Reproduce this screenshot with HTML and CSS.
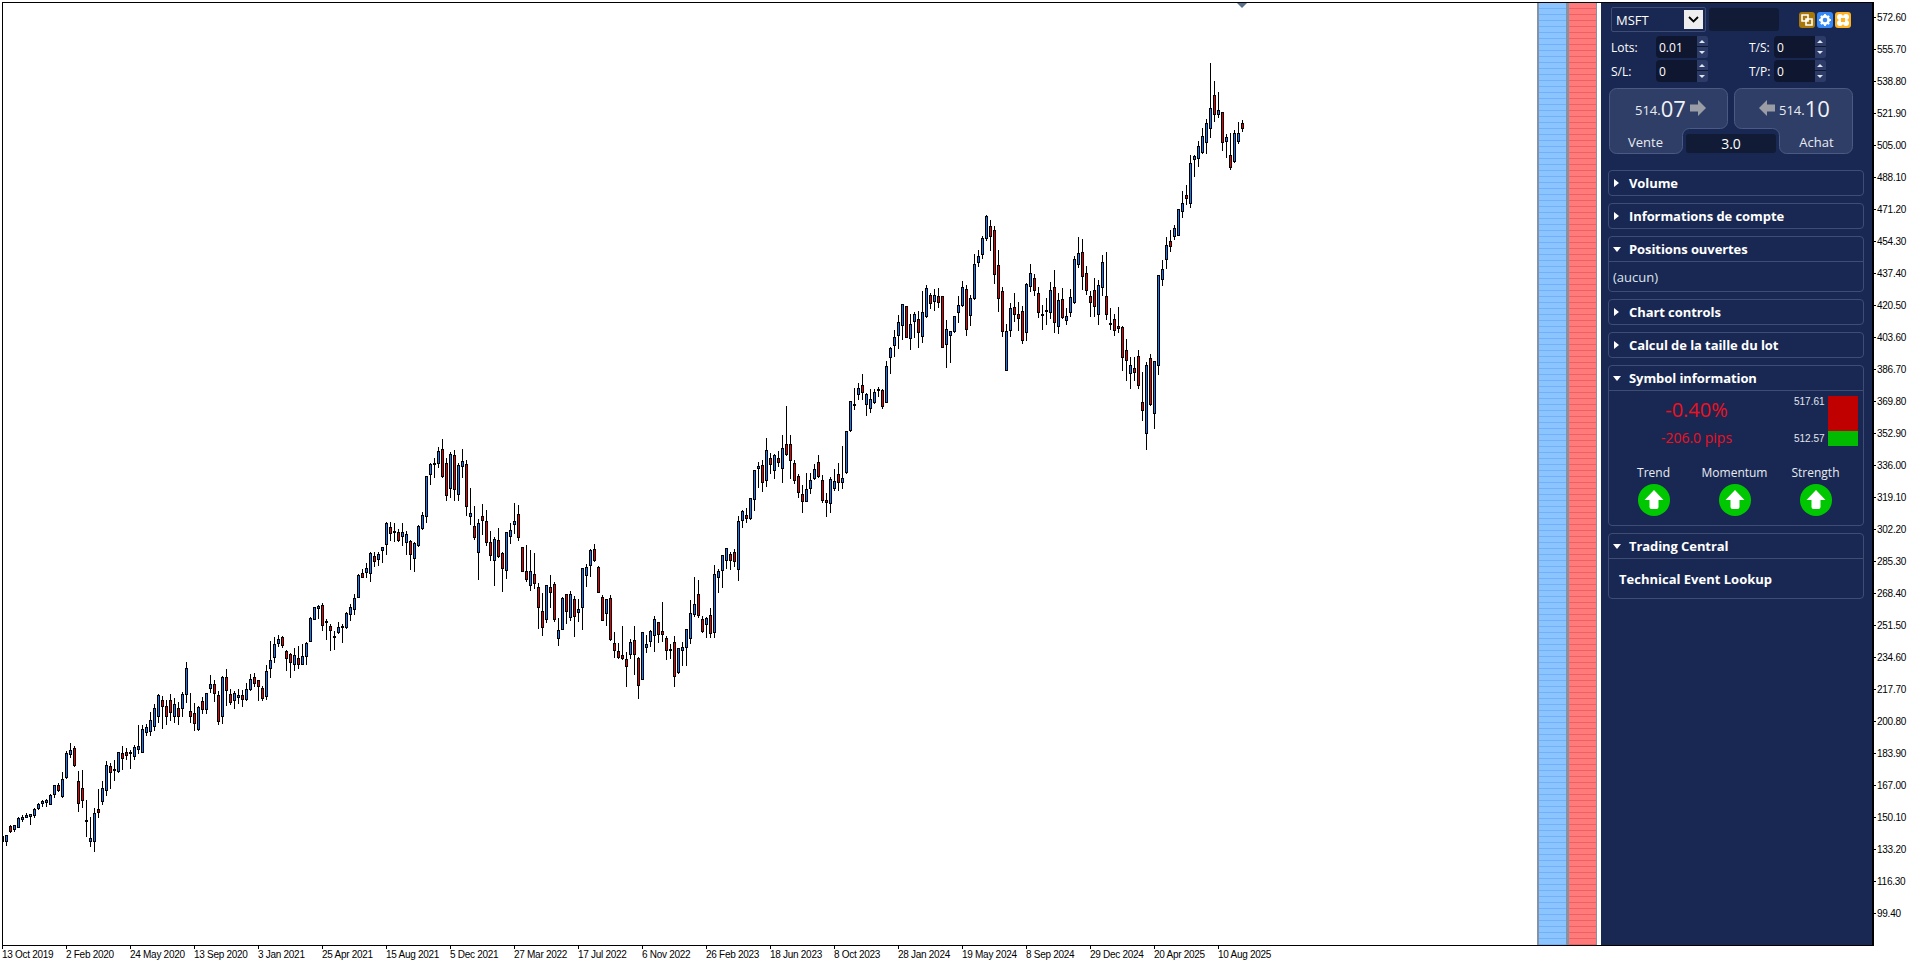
FILE: index.html
```html
<!DOCTYPE html>
<html>

<head>
    <title>MSFT chart</title>
    <link rel="stylesheet" href="styles.css">
</head>

<body>
    <div class="terminal">
        <div class="plot">
            <div class="canvas">
                <svg id="candles" class="candles" width="1534" height="941" viewBox="3 3 1534 941"></svg>
                <div class="marker"></div>
            </div>
            <div class="depth">
                <div class="depth-bar depth-buy"></div>
                <div class="depth-bar depth-sell"></div>
            </div>
            <div class="panel">
                <div class="symbol-row">
                    <div class="select">
                        <span>MSFT</span>
                        <span class="select-btn">
                            <svg width="11" height="7" viewBox="0 0 11 7"><path d="M1 1l4.5 4.5L10 1" fill="none" stroke="#000" stroke-width="1.8"/></svg>
                        </span>
                    </div>
                    <div class="search"></div>
                    <div class="tools">
                        <span class="tool tool-dark">
                            <svg width="12" height="12" viewBox="0 0 12 12"><path d="M1 1h6v6H1zM5 5h6v6H5z" fill="none" stroke="#fff" stroke-width="1.6"/></svg>
                        </span>
                        <span class="tool tool-blue">
                            <svg width="14" height="14" viewBox="0 0 14 14"><circle cx="7" cy="7" r="3.6" fill="none" stroke="#fff" stroke-width="2.6"/><path d="M7 1v2M7 11v2M1 7h2M11 7h2M2.8 2.8l1.4 1.4M9.8 9.8l1.4 1.4M2.8 11.2l1.4-1.4M9.8 4.2l1.4-1.4" stroke="#fff" stroke-width="1.8"/></svg>
                        </span>
                        <span class="tool tool-gold">
                            <svg width="14" height="14" viewBox="0 0 14 14"><circle cx="4" cy="4" r="3" fill="#fff"/><circle cx="10" cy="4" r="3" fill="#fff"/><circle cx="4" cy="10" r="3" fill="#fff"/><circle cx="10" cy="10" r="3" fill="#fff"/><rect x="5" y="5" width="4" height="4" fill="#ffb01e"/></svg>
                        </span>
                    </div>
                </div>

                <div class="fields">
                    <label class="field-label">Lots:</label>
                    <div class="field"><input class="num" value="0.01"><span class="spin"></span></div>
                    <label class="field-label">T/S:</label>
                    <div class="field"><input class="num" value="0"><span class="spin"></span></div>
                    <label class="field-label">S/L:</label>
                    <div class="field"><input class="num" value="0"><span class="spin"></span></div>
                    <label class="field-label">T/P:</label>
                    <div class="field"><input class="num" value="0"><span class="spin"></span></div>
                </div>

                <div class="trade">
                    <svg class="trade-bg" width="244" height="66" viewBox="0 0 244 66">
                        <path id="btn" d="M7.5 .5H111.5a7 7 0 0 1 7 7V33.5a7 7 0 0 1-7 7H80.5a7 7 0 0 0-7 7V58.5a7 7 0 0 1-7 7H7.5a7 7 0 0 1-7-7V7.5a7 7 0 0 1 7-7Z"/>
                        <use href="#btn" transform="translate(244 0) scale(-1 1)"/>
                    </svg>
                    <div class="quote quote-sell">
                        <span class="quote-small">514.</span><span class="quote-big">07</span>
                        <svg width="16" height="16" viewBox="0 0 16 16"><path d="M0 4.5h8V0l8 8-8 8v-4.500H0z" fill="#9a9da6"/></svg>
                    </div>
                    <div class="quote quote-buy">
                        <svg width="16" height="16" viewBox="0 0 16 16"><path d="M16 4.500H8V0L0 8l8 8v-4.500h8z" fill="#9a9da6"/></svg>
                        <span class="quote-small">514.</span><span class="quote-big">10</span>
                    </div>
                    <div class="trade-label trade-sell">Vente</div>
                    <div class="trade-size"><span>3.0</span></div>
                    <div class="trade-label trade-buy">Achat</div>
                </div>

                <div class="section">
                    <div class="section-head">Volume</div>
                </div>
                <div class="section">
                    <div class="section-head">Informations de compte</div>
                </div>
                <div class="section open">
                    <div class="section-head">Positions ouvertes</div>
                    <div class="section-body none">(aucun)</div>
                </div>
                <div class="section">
                    <div class="section-head">Chart controls</div>
                </div>
                <div class="section">
                    <div class="section-head">Calcul de la taille du lot</div>
                </div>
                <div class="section open">
                    <div class="section-head">Symbol information</div>
                    <div class="section-body info">
                        <div class="info-top">
                            <div class="change">
                                <div class="change-pct">-0.40%</div>
                                <div class="change-pips">-206.0 pips</div>
                            </div>
                            <div class="range">
                                <div class="range-labels">
                                    <span>517.61</span>
                                    <span>512.57</span>
                                </div>
                                <div class="range-bar">
                                    <div class="range-down"></div>
                                    <div class="range-up"></div>
                                </div>
                            </div>
                        </div>
                        <div class="signals">
                            <div class="signal">Trend
                                <svg width="32" height="32" viewBox="0 0 32 32"><circle cx="16" cy="16" r="16" fill="#00c800"/><path d="M16 6l9.500 10H20.500v7a2 2 0 0 1-2 2h-5a2 2 0 0 1-2-2v-7H6.500z" fill="#fff"/></svg>
                            </div>
                            <div class="signal">Momentum
                                <svg width="32" height="32" viewBox="0 0 32 32"><circle cx="16" cy="16" r="16" fill="#00c800"/><path d="M16 6l9.500 10H20.500v7a2 2 0 0 1-2 2h-5a2 2 0 0 1-2-2v-7H6.500z" fill="#fff"/></svg>
                            </div>
                            <div class="signal">Strength
                                <svg width="32" height="32" viewBox="0 0 32 32"><circle cx="16" cy="16" r="16" fill="#00c800"/><path d="M16 6l9.500 10H20.500v7a2 2 0 0 1-2 2h-5a2 2 0 0 1-2-2v-7H6.500z" fill="#fff"/></svg>
                            </div>
                        </div>
                    </div>
                </div>
                <div class="section open">
                    <div class="section-head">Trading Central</div>
                    <div class="section-body lookup">Technical Event Lookup</div>
                </div>
            </div>
        </div>

        <div class="axis-y">
            <span>572.60</span><span>555.70</span><span>538.80</span><span>521.90</span>
            <span>505.00</span><span>488.10</span><span>471.20</span><span>454.30</span>
            <span>437.40</span><span>420.50</span><span>403.60</span><span>386.70</span>
            <span>369.80</span><span>352.90</span><span>336.00</span><span>319.10</span>
            <span>302.20</span><span>285.30</span><span>268.40</span><span>251.50</span>
            <span>234.60</span><span>217.70</span><span>200.80</span><span>183.90</span>
            <span>167.00</span><span>150.10</span><span>133.20</span><span>116.30</span>
            <span>99.40</span>
        </div>

        <div class="axis-x">
            <span>13 Oct 2019</span><span>2 Feb 2020</span><span>24 May 2020</span><span>13 Sep 2020</span>
            <span>3 Jan 2021</span><span>25 Apr 2021</span><span>15 Aug 2021</span><span>5 Dec 2021</span>
            <span>27 Mar 2022</span><span>17 Jul 2022</span><span>6 Nov 2022</span><span>26 Feb 2023</span>
            <span>18 Jun 2023</span><span>8 Oct 2023</span><span>28 Jan 2024</span><span>19 May 2024</span>
            <span>8 Sep 2024</span><span>29 Dec 2024</span><span>20 Apr 2025</span><span>10 Aug 2025</span>
        </div>
    </div>
    <script src="chart.js"></script>
</body>

</html>
```

FILE: styles.css
```css
body {
    margin: 0;
    width: 1918px;
    height: 964px;
    overflow: hidden;
    background: #fff;
    font-family: "Open Sans", sans-serif;
}

.terminal {
    display: grid;
    grid-template-columns: 1872px 44px;
    grid-template-rows: 944px 18px;
    padding: 2px 0 0 2px;
}

.plot {
    display: flex;
    border-top: 1px solid #000;
    border-left: 1px solid #000;
    border-bottom: 1px solid #000;
    border-right: 3px solid #000;
    box-sizing: border-box;
    min-height: 0;
}

.canvas {
    position: relative;
    width: 1534px;
}

.candles {
    display: block;
    shape-rendering: crispEdges;
}

.marker {
    position: absolute;
    top: 0;
    left: 1234px;
    border-left: 5px solid transparent;
    border-right: 5px solid transparent;
    border-top: 5px solid #5a708a;
}

/* depth columns beside the chart */
.depth {
    display: flex;
    width: 64px;
    box-sizing: border-box;
    padding-right: 4px;
}

.depth-bar {
    width: 27px;
    border-left: 2px solid #8492a3;
}

.depth-buy {
    background: repeating-linear-gradient(#8cc4ff 0, #8cc4ff 5px, #6fb2fb 5px, #6fb2fb 6px);
}

.depth-sell {
    width: 28px;
    border-left-width: 3px;
    border-right: 1px solid #8492a3;
    background: repeating-linear-gradient(#ff7b7b 0, #ff7b7b 5px, #ef6060 5px, #ef6060 6px);
}

/* trading panel */
.panel {
    flex: 1;
    background: #192852;
    color: #fff;
    padding: 4px 8px 0 7px;
    display: flex;
    flex-direction: column;
    gap: 7px;
    font-size: 13px;
}

.symbol-row {
    display: flex;
    align-items: center;
    margin: 0 0 0 3px;
    height: 25px;
}

.select {
    width: 95px;
    height: 25px;
    box-sizing: border-box;
    border: 1px solid #3f4d75;
    border-radius: 2px;
    display: flex;
    align-items: center;
    justify-content: space-between;
    padding: 0 2px 0 4px;
    font-size: 13px;
}

.select-btn {
    width: 19px;
    height: 19px;
    background: #eee;
    display: flex;
    align-items: center;
    justify-content: center;
}

.search {
    width: 70px;
    height: 23px;
    margin-left: 3px;
    background: #111b36;
    border-radius: 3px;
}

.tools {
    display: flex;
    gap: 2px;
    margin-left: 20px;
}

.tool {
    width: 16px;
    height: 16px;
    border-radius: 3px;
    display: flex;
    align-items: center;
    justify-content: center;
}

.tool-dark { background: #a8780a; }
.tool-blue { background: #3689f5; }
.tool-gold { background: #ffb01e; }

.fields {
    display: grid;
    grid-template-columns: 45px 52px 41px 25px 52px;
    grid-auto-rows: 22px;
    row-gap: 2px;
    margin: -3px 0 -1px 3px;
    align-items: center;
    font-size: 12px;
}

.fields .field-label:nth-of-type(even) {
    grid-column: 4;
}

.fields .field:nth-of-type(even) {
    grid-column: 5;
}

.field {
    display: flex;
    height: 22px;
}

.num {
    width: 41px;
    box-sizing: border-box;
    border: none;
    padding: 0 3px;
    background: #0f1730;
    color: #fff;
    border-radius: 4px 0 0 4px;
    font: 12px "Open Sans", sans-serif;
}

.spin {
    position: relative;
    width: 11px;
    background: linear-gradient(#2c3b68 0, #2c3b68 10px, #0f1730 10px, #0f1730 11px, #2c3b68 11px);
    border-radius: 0 3px 3px 0;
}

.spin::before,
.spin::after {
    content: "";
    position: absolute;
    left: 2px;
    border-left: 3px solid transparent;
    border-right: 3px solid transparent;
}

.spin::before {
    top: 4px;
    border-bottom: 3px solid #dfe4f0;
}

.spin::after {
    bottom: 4px;
    border-top: 3px solid #dfe4f0;
}

.trade {
    position: relative;
    display: grid;
    grid-template-columns: 73px 98px 73px;
    grid-template-rows: 41px 25px;
    width: 244px;
    margin: 0 0 9px 1px;
}

.trade-bg {
    position: absolute;
    top: 0;
    left: 0;
    fill: #2f3e66;
    stroke: #4a5a82;
}

.quote {
    position: relative;
    display: flex;
    align-items: center;
    height: 33px;
    padding-top: 3px;
    grid-row: 1;
}

.quote-sell {
    grid-column: 1 / 3;
    padding-left: 26px;
}

.quote-sell svg {
    margin-left: 4px;
}

.quote-buy {
    grid-column: 2 / 4;
    padding-left: 77px;
}

.quote-buy svg {
    margin-right: 4px;
}

.quote-small {
    font-size: 13px;
    padding-top: 5px;
    color: #e8ebf3;
}

.quote-big {
    font-size: 22px;
    line-height: 26px;
    color: #f0f2f8;
}

.trade-label {
    position: relative;
    text-align: center;
    line-height: 27px;
    font-size: 13px;
    color: #e8ebf3;
}

.trade-size {
    position: relative;
    padding: 5px 4px 1px;
}

.trade-size span {
    display: block;
    height: 19px;
    line-height: 20px;
    background: #111b36;
    border-radius: 3px;
    text-align: center;
    font-size: 14px;
}

.section {
    border: 1px solid #3f4d75;
    border-radius: 4px;
    width: 256px;
    box-sizing: border-box;
}

.section-head {
    position: relative;
    height: 24px;
    line-height: 24px;
    padding-left: 20px;
    font-weight: 700;
    font-size: 13px;
    letter-spacing: -.08px;
}

.section-head::before {
    content: "";
    position: absolute;
    left: 5px;
    top: 8px;
    border-top: 4px solid transparent;
    border-bottom: 4px solid transparent;
    border-left: 5px solid #fff;
}

.open .section-head::before {
    left: 4px;
    top: 10px;
    border-left: 4px solid transparent;
    border-right: 4px solid transparent;
    border-top: 5px solid #fff;
    border-bottom: none;
}

.section-body {
    border-top: 1px solid #3f4d75;
}

.none {
    height: 29px;
    line-height: 31px;
    padding-left: 4px;
    color: #dfe4f0;
}

.info {
    height: 135px;
    box-sizing: border-box;
    padding-top: 5px;
}

.info-top {
    display: flex;
    height: 50px;
}

.change {
    width: 175px;
    text-align: center;
    color: #f0101f;
}

.change-pct {
    font-size: 20px;
    line-height: 27px;
}

.change-pips {
    font-size: 14px;
    line-height: 20px;
    margin-top: 5px;
}

.range {
    display: flex;
    gap: 3px;
    margin-left: 10px;
}

.range-labels {
    display: flex;
    flex-direction: column;
    justify-content: space-between;
    height: 48px;
    font: 10px "Liberation Sans", sans-serif;
    color: #e4e6ee;
}

.range-bar {
    width: 30px;
    height: 50px;
    display: flex;
    flex-direction: column;
}

.range-down {
    height: 35px;
    background: #c00000;
}

.range-up {
    height: 15px;
    background: #00bb00;
}

.signals {
    display: flex;
    margin-top: 18px;
    padding-left: 4px;
}

.signal {
    display: flex;
    flex-direction: column;
    align-items: center;
    width: 81px;
    gap: 3px;
    line-height: 17px;
    font-size: 12px;
    color: #e8ebf3;
}

.lookup {
    height: 40px;
    line-height: 40px;
    box-sizing: border-box;
    padding-left: 10px;
    font-weight: 700;
}

/* axes */
.axis-y {
    display: flex;
    flex-direction: column;
    padding-top: 6px;
    font: 10px "Liberation Sans", sans-serif;
    letter-spacing: -.25px;
    color: #000;
}

.axis-y span {
    position: relative;
    flex: 0 0 32.02px;
    line-height: 20px;
    padding-left: 3px;
}

.axis-y span::before {
    content: "";
    position: absolute;
    left: 0;
    top: 9px;
    width: 2px;
    height: 1px;
    background: #000;
}

.axis-x {
    grid-column: 1 / 3;
    display: flex;
    font: 10px "Liberation Sans", sans-serif;
    letter-spacing: -.28px;
    color: #000;
}

.axis-x span {
    position: relative;
    flex: 0 0 64px;
    line-height: 18px;
    box-sizing: border-box;
    white-space: nowrap;
}

.axis-x span::before {
    content: "";
    position: absolute;
    left: 0;
    top: 0;
    width: 1px;
    height: 3px;
    background: #000;
}
```

FILE: chart.js
```js
// rows: high, body top, body bottom, low (pixel y), then 1 for a falling candle
// one candle every 4px starting at x = 2
var rows = [
    [836,836,841,841,0],[835,835,841,845,0],[825,826,831,832,1],[825,825,829,831,0],[817,818,827,827,0],
    [815,817,819,821,0],[813,815,817,817,0],[814,814,816,824,0],[808,809,815,817,0],[803,804,808,809,0],
    [800,801,803,806,0],[799,800,802,806,0],[794,795,804,804,0],[785,785,794,797,0],[783,785,790,791,1],
    [772,779,796,797,0],[751,753,777,778,0],[743,750,754,757,0],[746,748,765,766,1],[771,781,803,811,1],
    [770,788,800,807,1],[800,820,821,836,0],[817,838,841,846,0],[808,813,841,851,0],[789,809,812,817,1],
    [781,788,801,804,0],[761,765,790,795,0],[763,766,772,788,1],[760,769,770,780,0],[752,752,771,772,0],
    [746,753,758,769,1],[748,752,755,759,1],[750,752,753,768,0],[745,747,756,759,0],[725,746,749,753,0],
    [725,729,752,752,0],[724,727,732,735,0],[712,720,731,735,0],
    [704,708,726,730,0],[694,695,716,722,0],[696,700,706,728,1],[700,706,716,724,1],[694,700,712,720,1],
    [698,704,716,722,0],[702,708,716,724,1],[692,694,708,716,0],[662,668,694,702,0],
    [693,711,716,722,1],[703,713,723,730,1],[706,707,729,730,0],[697,701,709,713,1],[693,693,709,713,0],
    [675,684,688,692,0],[680,684,693,701,1],[691,695,721,724,1],[676,677,716,723,0],[669,677,690,705,1],
    [689,694,702,704,1],[691,693,700,708,0],[689,695,697,703,0],[690,695,699,706,1],[683,689,699,700,0],
    [674,679,689,690,0],[673,677,683,686,1],[680,680,686,700,1],[686,688,698,700,1],[665,671,696,699,0],
    [641,660,668,677,0],[637,644,657,662,0],[635,639,643,646,0],[636,637,645,647,1],[650,651,658,670,1],
    [653,654,662,677,1],[648,655,664,670,0],[646,658,664,668,1],[644,656,664,664,0],[642,643,656,664,0],
    [617,618,641,641,0],[607,607,619,619,0],[605,606,608,618,0],[603,605,625,630,1],[619,621,622,639,0],
    [624,626,630,650,1],[631,636,637,649,0],[622,627,632,633,0],[624,626,627,642,0],[612,613,627,628,0],
    [604,607,614,620,0],[594,598,609,614,0],[574,575,597,597,0],[569,573,577,577,1],[563,568,572,577,0],
    [552,553,573,581,0],[552,556,561,566,1],[552,554,559,565,0],[547,547,550,562,0],[522,523,544,554,0],
    [522,527,533,540,1],[523,531,532,541,0],[529,532,540,541,1],[523,532,536,545,0],[531,534,542,554,0],
    [540,541,554,569,1],[542,543,558,571,0],[525,526,545,546,0],[512,515,528,529,0],[476,476,516,522,0],
    [463,464,474,484,0],[458,463,464,477,0],[447,451,463,467,0],[439,449,476,477,1],[458,463,495,500,1],
    [452,454,488,497,0],[450,455,489,500,1],[463,465,494,500,0],[449,461,466,477,0],[460,464,506,515,1],
    [488,513,516,524,0],[506,526,537,539,1],[519,523,552,579,0],
    [504,516,520,534,1],[510,521,542,545,1],[531,542,555,560,1],[537,539,560,585,0],[528,540,556,557,1],
    [552,553,568,591,1],[532,532,570,578,0],[523,530,536,543,0],[503,521,524,533,0],[505,514,537,540,1],
    [547,547,571,571,1],[545,571,579,581,1],[550,571,585,590,0],[553,574,583,588,1],[583,587,607,628,1],
    [593,611,627,635,1],[585,585,619,622,0],[575,587,592,607,1],[582,584,619,621,1],[618,630,638,645,0],
    [597,598,629,629,0],[594,594,611,623,1],[591,594,617,620,0],[596,599,616,636,1],[599,609,612,621,0],
    [568,568,607,629,0],[564,567,575,586,0],[549,550,565,576,0],[544,549,560,561,1],[566,567,592,592,1],
    [595,597,620,620,1],[599,599,613,625,0],[595,598,639,640,1],[632,643,650,657,1],[643,651,657,658,1],
    [626,655,658,659,1],[652,659,666,686,1],[639,642,654,658,0],[626,640,654,674,1],[657,658,685,698,1],
    [632,632,679,679,0],[635,644,647,652,0],[630,631,641,646,0],[616,619,635,651,0],[622,622,634,642,1],
    [602,631,634,641,1],[636,638,650,659,1],[644,649,650,658,0],[636,642,676,686,1],[648,648,672,673,0],
    [642,647,650,665,0],[629,629,647,665,0],[600,613,638,643,0],[577,604,614,616,0],[580,594,615,617,1],
    [616,619,631,632,1],[617,618,624,637,0],[608,615,633,637,1],[565,574,632,637,0],[569,571,577,592,0],
    [555,555,570,587,0],[548,548,560,568,0],[552,554,560,569,1],[549,552,561,566,1],[516,521,569,580,0],
    [510,511,520,527,0],[508,515,518,522,1],[498,498,518,519,0],[470,470,499,510,0],[462,466,468,487,0],
    [460,465,482,491,1],[438,450,480,486,0],[453,458,464,473,1],[454,455,470,478,0],[451,458,462,466,1],
    [435,448,468,482,0],[406,444,454,455,1],[435,444,460,478,1],[460,463,480,483,1],[474,476,492,497,1],
    [485,494,501,512,1],[473,489,501,501,0],[473,480,488,493,0],[464,469,478,479,0],[455,462,476,477,1],
    [475,480,500,502,1],[493,500,502,516,1],[477,479,503,512,0],[469,481,488,490,0],[463,474,482,490,1],
    [446,478,482,488,0],[431,431,472,473,0],[401,401,430,431,0],[388,404,405,409,0],[383,388,394,399,0],
    [374,385,392,399,1],[393,394,404,415,0],[389,399,408,412,0],[389,392,402,403,0],[387,389,390,396,0],
    [389,390,406,408,1],[361,366,402,402,0],[347,348,357,373,0],[330,337,345,356,0],[315,322,335,348,0],
    [304,304,325,339,0],[306,306,337,337,1],[314,324,338,349,0],[312,314,321,337,0],[311,319,332,347,1],
    [291,312,336,342,0],[285,288,316,317,0],[293,295,303,308,1],[289,295,301,310,0],[288,296,302,307,1],
    [296,296,347,347,1],[320,329,344,367,0],[331,331,335,362,0],[316,316,331,332,0],[296,305,312,322,0],
    [281,287,305,306,0],[285,289,329,335,1],[295,298,315,325,0],[254,264,298,299,0],[250,256,262,266,0],
    [236,238,254,258,0],[215,216,238,240,0],[220,226,236,250,1],[226,230,274,283,1],[250,265,298,311,1],
    [287,291,331,336,1],[324,331,370,370,0],[303,308,330,336,0],[293,307,314,321,1],[302,314,318,330,1],
    [306,311,340,343,1],[283,284,332,340,0],[264,273,286,291,0],[274,278,290,295,1],[287,293,312,317,1],
    [305,314,315,329,0],[298,310,311,324,0],[282,290,312,318,0],[270,287,322,332,1],[293,300,326,333,0],
    [288,299,317,318,1],[308,316,320,324,0],[289,297,312,316,0],[256,259,302,303,0],[237,253,264,267,0],
    [239,252,276,289,1],[266,273,290,294,1],[291,296,302,316,1],[278,290,306,316,1],[280,285,314,324,0],
    [255,262,287,295,0],[252,296,314,319,1],[308,323,324,329,0],[314,319,330,335,1],[307,326,328,332,1],
    [326,327,357,370,1],[339,350,360,380,1],[357,365,373,388,0],[357,368,372,380,1],[350,356,385,388,1],
    [372,402,410,420,1],[362,365,433,449,0],[354,358,404,405,1],[361,361,413,428,0],[275,275,365,374,0],
    [260,269,279,285,0],[237,245,259,268,0],[230,241,246,251,1],[225,228,236,239,0],[209,209,235,235,0],
    [191,203,211,217,0],[185,195,198,204,1],[155,163,203,207,0],[155,156,159,176,0],[141,146,158,166,0],
    [128,136,152,153,0],[119,123,142,153,0],[63,108,128,137,0],[81,95,114,121,1],[92,110,114,117,0],
    [112,112,142,150,1],[134,137,141,157,0],[133,155,167,169,1],[130,133,161,162,0],[122,133,141,143,0],
    [120,123,128,131,1]
];

var ink = '', blue = '', red = '';

rows.forEach(function (r, i) {
    var x = 2 + 4 * i;
    ink += 'M' + x + ' ' + r[0] + 'h1V' + (r[3] + 1) + 'h-1z';
    ink += 'M' + (x - 1) + ' ' + r[1] + 'h3V' + (r[2] + 1) + 'h-3z';
    if (r[2] - r[1] > 1) {
        var fill = 'M' + x + ' ' + (r[1] + 1) + 'h1V' + r[2] + 'h-1z';
        if (r[4]) red += fill; else blue += fill;
    }
});

document.getElementById('candles').innerHTML =
    '<path fill="#000" d="' + ink + '"/>' +
    '<path fill="#0b7df5" d="' + blue + '"/>' +
    '<path fill="#e60000" d="' + red + '"/>';
```
